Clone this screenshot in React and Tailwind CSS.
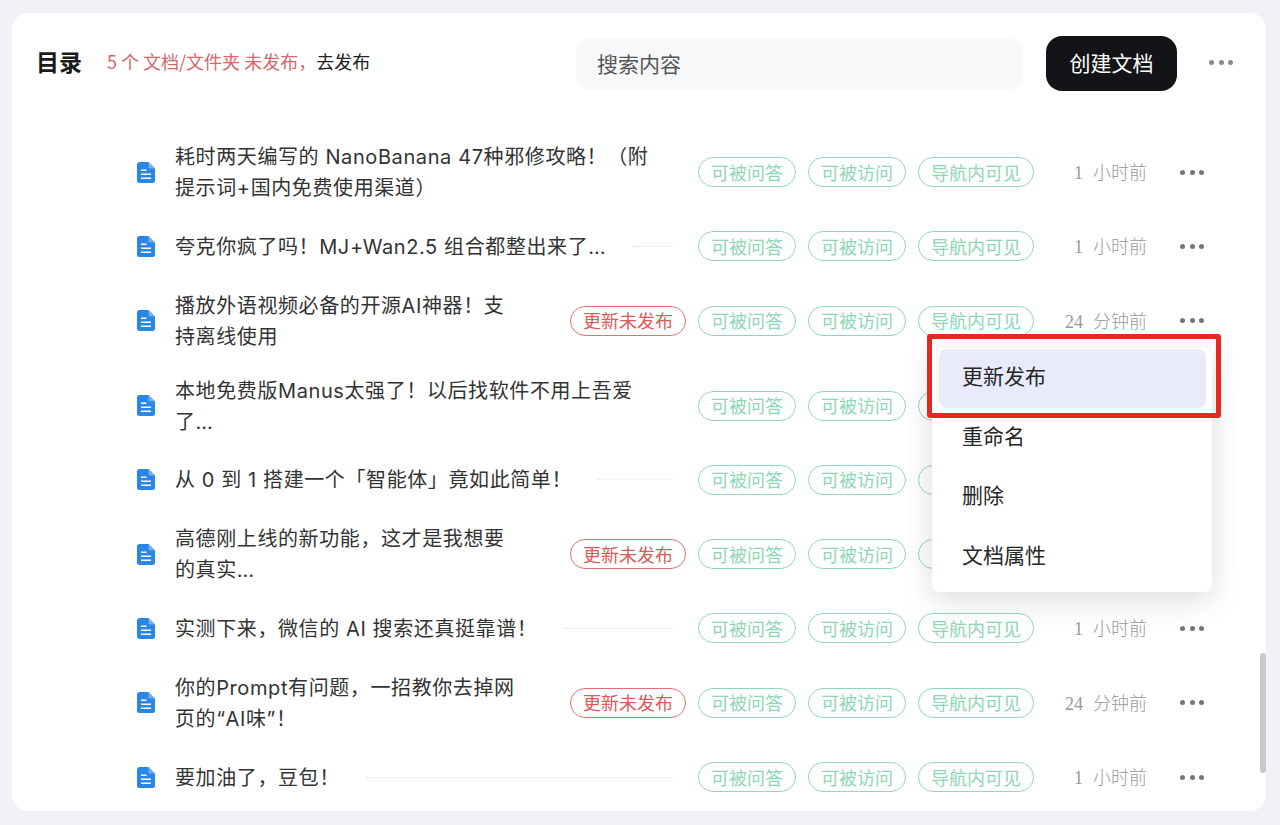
import React from 'react';

const rows = [
  { title: '耗时两天编写的 NanoBanana 47种邪修攻略！（附\n提示词+国内免费使用渠道）', time: '1', unit: '小时前' },
  { title: '夸克你疯了吗！MJ+Wan2.5 组合都整出来了…', time: '1', unit: '小时前', line: true },
  { title: '播放外语视频必备的开源AI神器！支\n持离线使用', time: '24', unit: '分钟前', updated: true },
  { title: '本地免费版Manus太强了！以后找软件不用上吾爱\n了…', time: '1', unit: '小时前', extra: true },
  { title: '从 0 到 1 搭建一个「智能体」竟如此简单！', time: '1', unit: '小时前', line: true },
  { title: '高德刚上线的新功能，这才是我想要\n的真实…', time: '24', unit: '分钟前', updated: true },
  { title: '实测下来，微信的 AI 搜索还真挺靠谱！', time: '1', unit: '小时前', line: true },
  { title: '你的Prompt有问题，一招教你去掉网\n页的“AI味”！', time: '24', unit: '分钟前', updated: true },
  { title: '要加油了，豆包！', time: '1', unit: '小时前', line: true },
];

function DocIcon() {
  return (
    <svg width="18" height="21" viewBox="0 0 18 21" className="shrink-0 ml-px">
      <path d="M2.5 0h9L18 6.5V18.5a2.5 2.5 0 0 1-2.5 2.5h-13A2.5 2.5 0 0 1 0 18.5V2.5A2.5 2.5 0 0 1 2.5 0z" fill="#2a87e6" />
      <path d="M11.5 0L18 6.5H13a1.5 1.5 0 0 1-1.5-1.5z" fill="#6fb0ef" />
      <rect x="4" y="7.5" width="5.5" height="1.5" fill="#ffffff" />
      <rect x="4" y="11.5" width="10" height="1.5" fill="#ffffff" />
      <rect x="4" y="15.5" width="10" height="1.5" fill="#ffffff" />
    </svg>
  );
}

function Dots({ color }) {
  return (
    <div className="flex w-[26px] justify-between items-center shrink-0 px-px">
      <span className={`w-[5px] h-[5px] rounded-full ${color}`} />
      <span className={`w-[5px] h-[5px] rounded-full ${color}`} />
      <span className={`w-[5px] h-[5px] rounded-full ${color}`} />
    </div>
  );
}

function Tag({ children, w }) {
  return (
    <span className={`${w} h-[30px] pb-px flex items-center justify-center rounded-full border border-[#92d8b8] text-[#8ed6b5] text-[18px] leading-none shrink-0`}>
      {children}
    </span>
  );
}

function Row({ row }) {
  return (
    <div className={`h-[74.3px] flex items-center pl-[124px] pr-[61px] shrink-0 ${row.extra ? 'mt-[10.5px]' : ''}`}>
      <DocIcon />
      <div className="ml-[20px] mt-[2px] text-[20px] tracking-[0.6px] leading-[31px] text-[#333333] whitespace-pre-line shrink-0 font-['Inter','Noto_Sans_CJK_SC',sans-serif]">
        {row.title}
      </div>
      <div className="flex-1 min-w-0">
        {row.line && <div className="ml-[26px] mr-[12px] border-t border-dotted border-[#e2e2e2]" />}
      </div>
      {row.updated && (
        <span className="w-[116px] h-[30px] pb-px flex items-center justify-center rounded-full border border-[#e0706f] text-[#dc5b5a] text-[18px] leading-none shrink-0">
          更新未发布
        </span>
      )}
      <div className="flex gap-3 ml-3 shrink-0">
        <Tag w="w-[98px]">可被问答</Tag>
        <Tag w="w-[98px]">可被访问</Tag>
        <Tag w="w-[116px]">导航内可见</Tag>
      </div>
      <div className="w-[113px] mt-[3px] text-right text-[18px] font-light text-[#999999] font-['Liberation_Serif','Noto_Sans_CJK_SC',serif] shrink-0">
        {row.time}<span className="ml-[10px]">{row.unit}</span>
      </div>
      <div className="ml-[32px]">
        <Dots color="bg-[#777777]" />
      </div>
    </div>
  );
}

export default function App() {
  return (
    <div className="w-[1280px] h-[825px] overflow-hidden bg-[#f0f2f6] pt-[13px] pl-[12px] font-['Noto_Sans_CJK_SC','Noto_Sans',sans-serif]">
      <div className="relative w-[1254px] h-[798px] bg-white rounded-[16px] overflow-hidden flex flex-col">
        <div className="h-[122px] shrink-0 flex items-start pt-[23px] pl-[24px] pr-[32px]">
          <div className="h-[55px] flex items-center w-full">
            <h1 className="text-[23px] font-bold text-[#1a1a1a] leading-none -mt-[5px]">目录</h1>
            <p className="ml-[25px] text-[18px] -mt-[4px] text-[#d4686a]">
              5 个 文档/文件夹 未发布，<span className="text-[#222222]">去发布</span>
            </p>
            <div className="ml-auto w-[446px] h-[52px] rounded-[14px] bg-[#f7f8fa] flex items-center pl-[21px] text-[21px] text-[#555555]">
              搜索内容
            </div>
            <button className="ml-[24px] w-[131px] h-[55px] pb-[2px] rounded-[16px] bg-[#131417] text-white text-[21px]">创建文档</button>
            <div className="ml-[31px] -mt-[2px]">
              <Dots color="bg-[#8a8a8a]" />
            </div>
          </div>
        </div>

        <div className="flex flex-col">
          {rows.map((row, i) => (
            <Row key={i} row={row} />
          ))}
        </div>

        {/* scrollbar */}
        <div className="absolute right-0 top-[640px] w-[6px] h-[120px] rounded-full bg-[#c8c8c8]" />

        {/* row menu */}
        <div className="absolute left-[920px] top-[335px] w-[280px] h-[244px] bg-white rounded-[8px] shadow-[0_8px_32px_rgba(0,0,0,0.14)] pt-[1px] px-[7px] text-[21px] text-[#262626]">
          <div className="w-[267px] h-[59px] pb-[5px] rounded-[8px] bg-[#e9eafa] flex items-center pl-[23px]">更新发布</div>
          <div className="h-[59.5px] pb-[5px] flex items-center pl-[23px]">重命名</div>
          <div className="h-[59.5px] pb-[5px] flex items-center pl-[23px]">删除</div>
          <div className="h-[59.5px] pb-[5px] flex items-center pl-[23px]">文档属性</div>
        </div>

        {/* red annotation box */}
        <div className="absolute left-[915px] top-[321px] w-[294px] h-[84px] border-[5px] border-[#e5291f] rounded-[3px]" />
      </div>
    </div>
  );
}
